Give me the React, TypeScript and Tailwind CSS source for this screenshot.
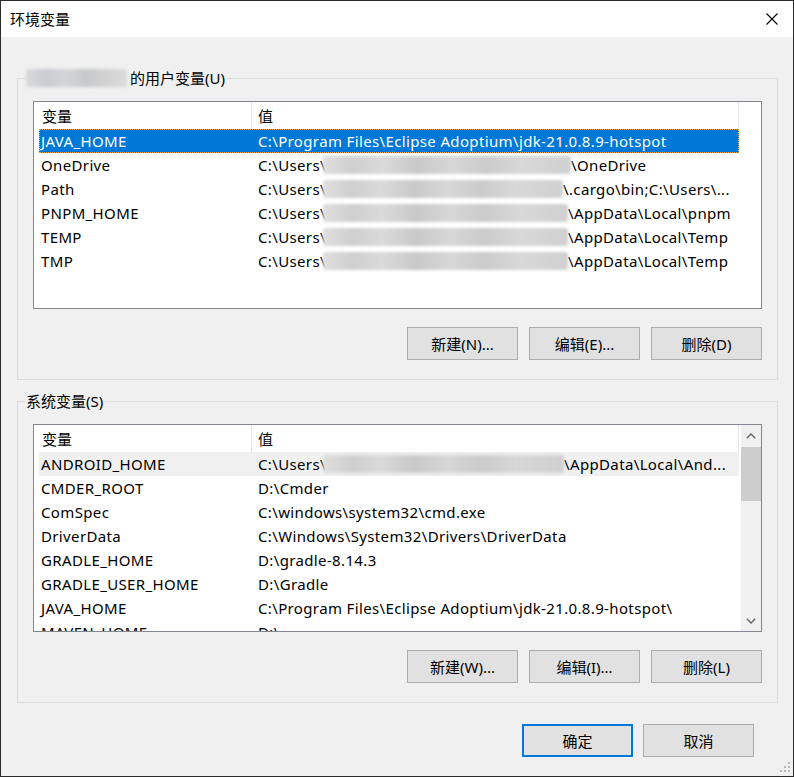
import React from "react";

type Row = {
  name: string;
  value?: string;
  prefix?: string;
  blur?: number;
  suffix?: string;
  selected?: boolean;
  hover?: boolean;
};

const userRows: Row[] = [
  { name: "JAVA_HOME", value: "C:\\Program Files\\Eclipse Adoptium\\jdk-21.0.8.9-hotspot", selected: true },
  { name: "OneDrive", prefix: "C:\\Users\\", blur: 248, suffix: "\\OneDrive" },
  { name: "Path", prefix: "C:\\Users\\", blur: 240, suffix: "\\.cargo\\bin;C:\\Users\\..." },
  { name: "PNPM_HOME", prefix: "C:\\Users\\", blur: 245, suffix: "\\AppData\\Local\\pnpm" },
  { name: "TEMP", prefix: "C:\\Users\\", blur: 245, suffix: "\\AppData\\Local\\Temp" },
  { name: "TMP", prefix: "C:\\Users\\", blur: 245, suffix: "\\AppData\\Local\\Temp" },
];

const sysRows: Row[] = [
  { name: "ANDROID_HOME", prefix: "C:\\Users\\", blur: 241, suffix: "\\AppData\\Local\\And...", hover: true },
  { name: "CMDER_ROOT", value: "D:\\Cmder" },
  { name: "ComSpec", value: "C:\\windows\\system32\\cmd.exe" },
  { name: "DriverData", value: "C:\\Windows\\System32\\Drivers\\DriverData" },
  { name: "GRADLE_HOME", value: "D:\\gradle-8.14.3" },
  { name: "GRADLE_USER_HOME", value: "D:\\Gradle" },
  { name: "JAVA_HOME", value: "C:\\Program Files\\Eclipse Adoptium\\jdk-21.0.8.9-hotspot\\" },
  { name: "MAVEN_HOME", value: "D:\\" },
];

const blurCls =
  "inline-block h-[18px] rounded-[3px] bg-[linear-gradient(90deg,#dedede_0%,#cfcfcf_12%,#dadada_24%,#c9c9c9_38%,#d7d7d7_52%,#cbcbcb_66%,#d8d8d8_80%,#d0d0d0_100%)] blur-[1.5px]";

function ValueCell({ row }: { row: Row }) {
  if (row.value !== undefined) return <span>{row.value}</span>;
  return (
    <span className="flex items-center">
      <span className="inline-block w-[65px] shrink-0">{row.prefix}</span>
      <span className={blurCls} style={{ width: row.blur }} />
      <span className="whitespace-nowrap">{row.suffix}</span>
    </span>
  );
}

function ListRow({ row }: { row: Row }) {
  const base = "flex h-[24px] w-[700px] items-center whitespace-nowrap tracking-[0.36px]";
  const state = row.selected
    ? "bg-[#0078d7] text-white outline outline-1 outline-dotted outline-[#f0a44c] -outline-offset-1"
    : row.hover
    ? "bg-[#f0f0f0] text-black"
    : "text-black";
  return (
    <div className={`${base} ${state}`}>
      <div className="w-[213px] shrink-0 pl-[2px]">{row.name}</div>
      <div className="pl-[6px]">
        <ValueCell row={row} />
      </div>
    </div>
  );
}

function Header({ width }: { width: string }) {
  return (
    <div className={`flex h-[27px] shrink-0 items-center ${width}`}>
      <div className="flex h-full w-[218px] items-center border-r border-[#e5e5e5] pl-[8px]">变量</div>
      <div className="flex h-full flex-1 items-center border-r border-[#e5e5e5] pl-[6px]">值</div>
    </div>
  );
}

function Chevron({ down }: { down?: boolean }) {
  return (
    <svg width="10" height="6" viewBox="0 0 10 6" className={down ? "rotate-180" : ""}>
      <polyline points="0.8,5.2 5,1 9.2,5.2" fill="none" stroke="#606060" strokeWidth="1.3" />
    </svg>
  );
}

function WinButton({ label, primary }: { label: string; primary?: boolean }) {
  return (
    <button
      className={
        primary
          ? "flex h-[33px] w-[111px] items-center justify-center border-2 border-[#0078d7] bg-[#e1e1e1] text-black"
          : "flex h-[33px] w-[111px] items-center justify-center border border-[#adadad] bg-[#e1e1e1] text-black"
      }
    >
      {label}
    </button>
  );
}

export default function App() {
  return (
    <div
      className="relative flex h-[777px] w-[794px] flex-col overflow-hidden border border-[#2b2b2b] bg-[#f0f0f0] text-[15px] leading-[20px] text-black"
      style={{ fontFamily: '"Noto Sans", "Noto Sans CJK SC", sans-serif' }}
    >
      {/* Title bar */}
      <div className="flex h-[36px] shrink-0 items-center justify-between bg-white pl-[9px] pr-[15px]">
        <span>环境变量</span>
        <svg width="12" height="12" viewBox="0 0 12 12">
          <path d="M0.5 0.5 L11.5 11.5 M11.5 0.5 L0.5 11.5" stroke="#000" strokeWidth="1.1" />
        </svg>
      </div>

      {/* User variables group */}
      <div className="relative ml-[16px] mt-[41px] w-[761px] border border-[#dcdcdc] px-[15px] pb-[19px] pt-[22px]">
        <div className="absolute left-[8px] top-[-11px] flex items-center bg-[#f0f0f0] pr-[2px]">
          <span className="mr-[3px] inline-block h-[18px] w-[101px] rounded-[4px] bg-[linear-gradient(90deg,#d8dadc_0%,#c9ccd0_20%,#d4d4d6_40%,#c6c9cc_60%,#d2d2d2_80%,#dcdcdc_100%)] blur-[1.5px]" />
          <span>的用户变量(U)</span>
        </div>
        <div className="flex h-[208px] w-[729px] flex-col overflow-hidden border border-[#828790] bg-white">
          <Header width="w-[705px]" />
          <div className="pl-[5px]">
            {userRows.map((r) => (
              <ListRow key={r.name} row={r} />
            ))}
          </div>
        </div>
        <div className="mt-[18px] flex w-[729px] justify-end gap-[11px]">
          <WinButton label="新建(N)..." />
          <WinButton label="编辑(E)..." />
          <WinButton label="删除(D)" />
        </div>
      </div>

      {/* System variables group */}
      <div className="relative ml-[16px] mt-[21px] w-[761px] border border-[#dcdcdc] px-[15px] pb-[19px] pt-[22px]">
        <div className="absolute left-[7px] top-[-11px] bg-[#f0f0f0] px-[1px]">系统变量(S)</div>
        <div className="flex h-[208px] w-[729px] overflow-hidden border border-[#828790] bg-white">
          <div className="flex w-[706px] flex-col overflow-hidden">
            <Header width="w-[705px]" />
            <div className="pl-[5px]">
              {sysRows.map((r) => (
                <ListRow key={r.name} row={r} />
              ))}
            </div>
          </div>
          <div className="ml-[1px] flex w-[20px] flex-col bg-[#f0f0f0]">
            <div className="flex h-[21px] items-center justify-center">
              <Chevron />
            </div>
            <div className="mt-[1px] h-[54px] bg-[#cdcdcd]" />
            <div className="flex-1" />
            <div className="flex h-[21px] items-center justify-center">
              <Chevron down />
            </div>
          </div>
        </div>
        <div className="mt-[18px] flex w-[729px] justify-end gap-[11px]">
          <WinButton label="新建(W)..." />
          <WinButton label="编辑(I)..." />
          <WinButton label="删除(L)" />
        </div>
      </div>

      {/* Dialog buttons */}
      <div className="mt-[21px] flex justify-end gap-[10px] pr-[39px]">
        <WinButton label="确定" primary />
        <WinButton label="取消" />
      </div>

      {/* Resize grip */}
      <svg className="absolute bottom-[3px] right-[2px]" width="11" height="11" viewBox="0 0 11 11">
        <rect x="8" y="0" width="2" height="2" fill="#b8b8b8" />
        <rect x="4" y="4" width="2" height="2" fill="#b8b8b8" />
        <rect x="8" y="4" width="2" height="2" fill="#b8b8b8" />
        <rect x="0" y="8" width="2" height="2" fill="#b8b8b8" />
        <rect x="4" y="8" width="2" height="2" fill="#b8b8b8" />
        <rect x="8" y="8" width="2" height="2" fill="#b8b8b8" />
      </svg>
    </div>
  );
}
